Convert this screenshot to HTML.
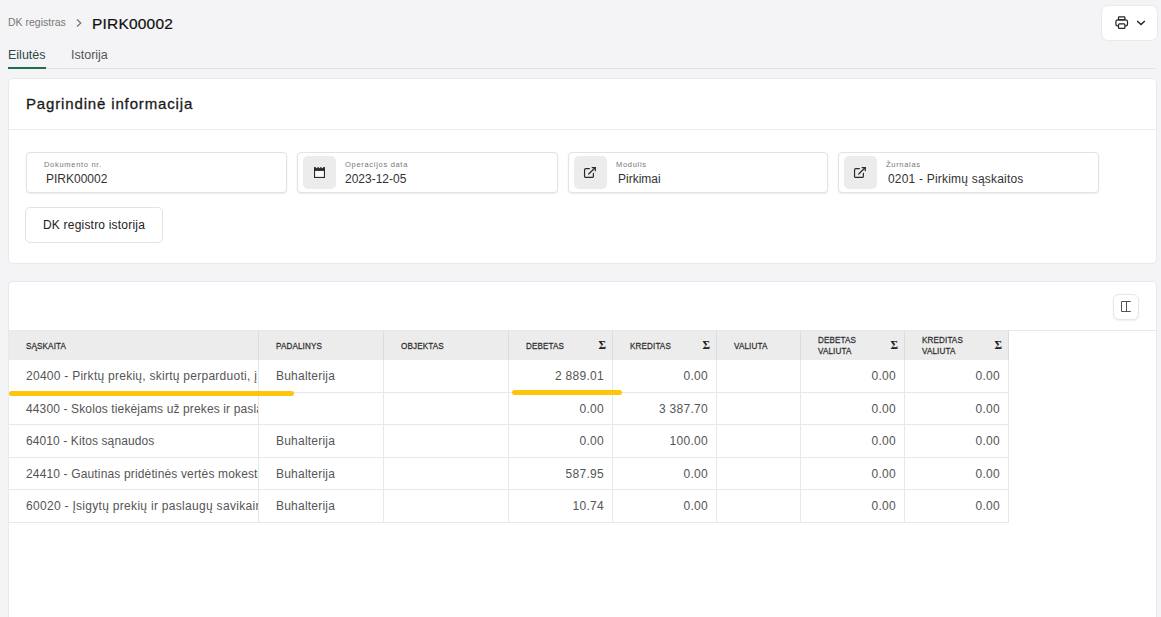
<!DOCTYPE html>
<html><head><meta charset="utf-8">
<style>
*{box-sizing:border-box;margin:0;padding:0}
html,body{width:1161px;height:617px;overflow:hidden;background:#f4f4f6;font-family:"Liberation Sans",sans-serif;color:#3a3a3a}
.abs{position:absolute}
#bc1{left:8px;top:15px;font-size:10.5px;color:#777;line-height:14px}
#chev{left:74px;top:17px;width:10px;height:12px}
#bc2{left:92px;top:14px;font-size:15.5px;color:#111;line-height:20px;letter-spacing:.2px;-webkit-text-stroke:.22px #111}
#print{left:1101px;top:5px;width:57px;height:36px;background:#fff;border:1px solid #e9e9ec;border-radius:7px}
#tab1{left:8px;top:47px;font-size:12.5px;color:#2c4a44;line-height:16px}
#tab1u{left:8px;top:67px;width:38px;height:2px;background:#1f6f4f;z-index:2}
#tab2{left:71px;top:47px;font-size:12.5px;color:#555;line-height:16px}
#tabline{left:8px;top:68px;width:1148px;height:1px;background:#e2e2e4}
.card{background:#fff;border:1px solid #e9e9eb;border-radius:5px}
#card1{left:8px;top:78px;width:1149px;height:186px}
#card2{left:8px;top:281px;width:1149px;height:345px}
#title{left:26px;top:95px;font-size:15px;color:#1a1a1a;line-height:18px;letter-spacing:.85px;-webkit-text-stroke:.3px #1a1a1a}
#tdiv{left:9px;top:129px;width:1147px;height:1px;background:#ececee}
.field{top:152px;height:41px;width:261px;background:#fff;border:1px solid #e3e3e6;border-radius:4px;box-shadow:0 1px 2px rgba(0,0,0,.08)}
.field .lbl{position:absolute;top:7px;font-size:7.5px;color:#777;line-height:9px;letter-spacing:.7px}
.field .val{position:absolute;top:19px;font-size:12px;color:#333;line-height:14px;letter-spacing:0}
.field .ic{position:absolute;left:5px;top:3px;width:33px;height:33px;background:#ececec;border-radius:5px}
#btn{left:25px;top:207px;width:138px;height:36px;background:#fff;border:1px solid #e3e3e6;border-radius:5px;font-size:12px;color:#222;text-align:center;line-height:34px;letter-spacing:.2px}
#colbtn{left:1113px;top:294px;width:26px;height:26px;background:#fff;border:1px solid #e6e6e9;border-radius:6px;box-shadow:0 1px 2px rgba(0,0,0,.07)}
#hline{left:9px;top:330px;width:1147px;height:1px;background:#e8e8ea}
table{position:absolute;left:9px;top:331px;border-collapse:separate;border-spacing:0;table-layout:fixed;width:1000px}
th{height:29px;background:#ececec;font-size:8.1px;font-weight:normal;color:#2e2e2e;-webkit-text-stroke:.22px #2e2e2e;text-align:left;padding:2px 0 0 17px;border-right:1px solid #dcdcdc;letter-spacing:.13px;position:relative;line-height:10px;vertical-align:middle}
th.two{padding-top:0}
.ht{display:inline-block;transform:scaleY(1.14);transform-origin:50% 50%}
td{height:32px;font-size:12px;color:#555;padding:0 0 0 17px;border-right:1px solid #e8e8e8;border-bottom:1px solid #e8e8e8;white-space:nowrap;overflow:hidden;letter-spacing:.22px}
tr.r33 td{height:33px}
td.n{text-align:right;padding:0 8px 0 0;letter-spacing:.3px}
th .sg{position:absolute;right:6px;top:7.5px;font-family:'Liberation Serif',serif;font-size:11.5px;line-height:12px;font-weight:bold;letter-spacing:0;-webkit-text-stroke:0;color:#222}
.hl{height:5px;background:#fdc60c;border-radius:2.5px}
</style></head><body>
<div class="abs" id="bc1">DK registras</div>
<svg class="abs" id="chev" viewBox="0 0 10 12"><path d="M3 2.5 L6.8 6 L3 9.5" fill="none" stroke="#777" stroke-width="1.3"/></svg>
<div class="abs" id="bc2">PIRK00002</div>
<div class="abs" id="print">
<svg style="position:absolute;left:12px;top:9px" width="16" height="16" viewBox="0 0 16 16" fill="none" stroke="#222" stroke-width="1.2"><rect x="4.5" y="1.8" width="6.4" height="3" rx=".6"/><rect x="1.9" y="4.8" width="11.6" height="6.2" rx="1.9"/><rect x="4.5" y="8.8" width="6.4" height="4.6" rx=".9" fill="#fff"/></svg>
<svg style="position:absolute;left:34px;top:13px" width="10" height="8" viewBox="0 0 10 8" fill="none" stroke="#222" stroke-width="1.4"><path d="M1.2 2 L5 5.6 L8.8 2"/></svg>
</div>
<div class="abs" id="tab1">Eilutės</div><div class="abs" id="tab1u"></div>
<div class="abs" id="tab2">Istorija</div>
<div class="abs" id="tabline"></div>

<div class="abs card" id="card1"></div>
<div class="abs" id="tdiv"></div>
<div class="abs" id="title">Pagrindinė informacija</div>
<div class="abs field" style="left:26px"><div class="lbl" style="left:17px">Dokumento nr.</div><div class="val" style="left:19px">PIRK00002</div></div>
<div class="abs field" style="left:297px"><div class="ic"><svg style="position:absolute;left:11px;top:11px" width="11" height="11" viewBox="0 0 11 11"><rect x=".55" y=".9" width="9.9" height="9.55" fill="#fafafa" stroke="#2b2b2b" stroke-width="1.1"/><rect x="0" y=".3" width="11" height="3.6" fill="#2b2b2b"/><rect x="1.9" y="0" width="1.5" height="1.1" fill="#ececec"/><rect x="4.75" y="0" width="1.5" height="1.1" fill="#ececec"/><rect x="7.6" y="0" width="1.5" height="1.1" fill="#ececec"/></svg></div><div class="lbl" style="left:47px">Operacijos data</div><div class="val" style="left:47px">2023-12-05</div></div>
<div class="abs field" style="left:568px;width:260px"><div class="ic"><svg style="position:absolute;left:9px;top:10px" width="15" height="14" viewBox="0 0 15 14" fill="none" stroke="#2b2b2b" stroke-width="1.2" stroke-linecap="round" stroke-linejoin="round"><path d="M6.4 2.65 H2.85 Q1.55 2.65 1.55 3.95 V10.15 Q1.55 11.45 2.85 11.45 H9.1 Q10.4 11.45 10.4 10.15 V7.3"/><path d="M5.7 8 L12.1 1.8"/><path d="M8.7 1.6 H12.3 V5.3" stroke-linejoin="miter" stroke-linecap="butt"/></svg></div><div class="lbl" style="left:47px">Modulis</div><div class="val" style="left:49px">Pirkimai</div></div>
<div class="abs field" style="left:838px"><div class="ic"><svg style="position:absolute;left:9px;top:10px" width="15" height="14" viewBox="0 0 15 14" fill="none" stroke="#2b2b2b" stroke-width="1.2" stroke-linecap="round" stroke-linejoin="round"><path d="M6.4 2.65 H2.85 Q1.55 2.65 1.55 3.95 V10.15 Q1.55 11.45 2.85 11.45 H9.1 Q10.4 11.45 10.4 10.15 V7.3"/><path d="M5.7 8 L12.1 1.8"/><path d="M8.7 1.6 H12.3 V5.3" stroke-linejoin="miter" stroke-linecap="butt"/></svg></div><div class="lbl" style="left:47px">Žurnalas</div><div class="val" style="left:49px;letter-spacing:.2px">0201 - Pirkimų sąskaitos</div></div>
<div class="abs" id="btn">DK registro istorija</div>

<div class="abs card" id="card2"></div>
<div class="abs" id="hline"></div>
<div class="abs" id="colbtn"><svg style="position:absolute;left:6px;top:5px" width="12" height="13" viewBox="0 0 12 13" fill="none" stroke="#4a4a4a" stroke-width=".95"><path d="M10.8 1.5 H1.5 V11.5 H10.8 M6.5 1.5 V11.5"/></svg></div>
<table>
<colgroup><col style="width:250px"><col style="width:125px"><col style="width:125px"><col style="width:104px"><col style="width:104px"><col style="width:84px"><col style="width:104px"><col style="width:104px"></colgroup>
<tr><th><span class="ht">SĄSKAITA</span></th><th><span class="ht">PADALINYS</span></th><th><span class="ht">OBJEKTAS</span></th><th><span class="ht">DEBETAS</span><span class="sg">Σ</span></th><th><span class="ht">KREDITAS</span><span class="sg">Σ</span></th><th><span class="ht">VALIUTA</span></th><th class="two"><span class="ht">DEBETAS<br>VALIUTA</span><span class="sg">Σ</span></th><th class="two"><span class="ht">KREDITAS<br>VALIUTA</span><span class="sg">Σ</span></th></tr>
<tr class="r33"><td style="letter-spacing:0.265px">20400 - Pirktų prekių, skirtų perparduoti, į</td><td>Buhalterija</td><td></td><td class="n">2 889.01</td><td class="n">0.00</td><td></td><td class="n">0.00</td><td class="n">0.00</td></tr>
<tr class="r32"><td style="letter-spacing:0.130px">44300 - Skolos tiekėjams už prekes ir paslaugas</td><td></td><td></td><td class="n">0.00</td><td class="n">3 387.70</td><td></td><td class="n">0.00</td><td class="n">0.00</td></tr>
<tr class="r33"><td style="letter-spacing:0.105px">64010 - Kitos sąnaudos</td><td>Buhalterija</td><td></td><td class="n">0.00</td><td class="n">100.00</td><td></td><td class="n">0.00</td><td class="n">0.00</td></tr>
<tr class="r32"><td style="letter-spacing:0.150px">24410 - Gautinas pridėtinės vertės mokestis</td><td>Buhalterija</td><td></td><td class="n">587.95</td><td class="n">0.00</td><td></td><td class="n">0.00</td><td class="n">0.00</td></tr>
<tr class="r33"><td style="letter-spacing:0.300px">60020 - Įsigytų prekių ir paslaugų savikaina</td><td>Buhalterija</td><td></td><td class="n">10.74</td><td class="n">0.00</td><td></td><td class="n">0.00</td><td class="n">0.00</td></tr>
</table>
<div class="abs hl" style="left:9px;top:391px;width:285px"></div>
<div class="abs hl" style="left:512px;top:390px;width:110px"></div>
</body></html>
